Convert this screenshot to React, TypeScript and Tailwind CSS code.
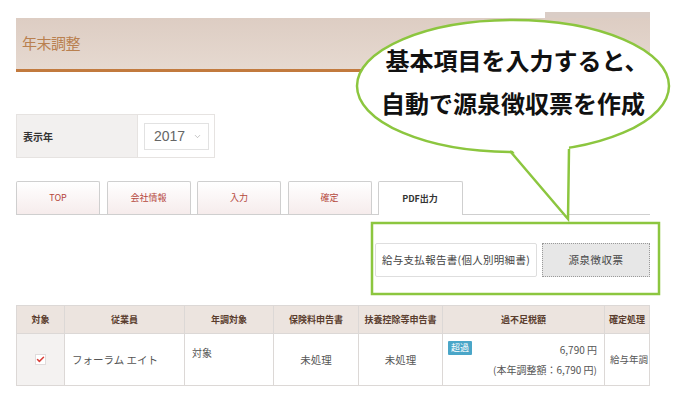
import { Check, ChevronDown } from "lucide-react"

const jp = "font-['Noto_Sans_CJK_JP','Noto_Sans',sans-serif]"

const tabs = ['TOP', '会社情報', '入力', '確定']

export default function App() {
  return (
    <div className={`relative w-[682px] h-[404px] overflow-hidden bg-white ${jp}`}>
      <div className="px-[16px] pt-[12px] w-[666px]">
        {/* header */}
        <div className="ml-auto w-[105px] h-[6px] bg-[#dacdc6]" />
        <div className="h-[54px] bg-gradient-to-b from-[#ddcdc3] to-[#e6d9d0] border-b-[3px] border-[#c27a3e] flex items-center pl-[6px]">
          <span className="text-[15px] text-[#b9804f] tracking-[-0.5px]">年末調整</span>
        </div>

        {/* year */}
        <div className="mt-[42px] w-[199px] h-[44px] border border-[#e6e3e1] flex">
          <div className="w-[121px] bg-[#f2f0ef] border-r border-[#e6e3e1] flex items-center pl-[6px] text-[10px] font-bold text-[#333]">
            表示年
          </div>
          <div className="flex items-center pl-[6px]">
            <div className="w-[65px] h-[27px] border border-[#e2e2e2] flex items-center justify-between pl-[9px] pr-[6px]">
              <span className="text-[14px] text-[#666] font-['Liberation_Sans',sans-serif]">2017</span>
              <ChevronDown className="w-[9px] h-[9px] text-[#999]" strokeWidth={1.5} />
            </div>
          </div>
        </div>

        {/* tabs */}
        <div className="mt-[24px] h-[33px] flex items-end border-b border-[#cfcfcf] w-[634px]">
          {tabs.map((t, i) => (
            <div
              key={t}
              className={`w-[84px] h-[33px] ${i > 0 ? 'ml-[6.5px]' : ''} border border-b-0 border-[#cfcfcf] rounded-t-[2px] bg-gradient-to-b from-white to-[#f6ecec] flex items-center justify-center text-[9px] text-[#b5473c]`}
            >
              {t}
            </div>
          ))}
          <div className="ml-[6px] w-[85px] h-[34px] -mb-px border border-b-0 border-[#cfcfcf] rounded-t-[2px] bg-white flex items-center justify-center text-[9px] text-[#333] font-semibold">
            PDF出力
          </div>
        </div>

        {/* pdf buttons */}
        <div className="mt-[28px] flex justify-end w-[634px] gap-[5px]">
          <div className="w-[162px] h-[34px] border border-[#dedede] rounded-[2px] bg-white flex items-center justify-center text-[10.5px] text-[#444] tracking-[0.3px]">
            給与支払報告書(個人別明細書)
          </div>
          <div className="w-[108px] h-[34px] border border-dotted border-[#9a9a9a] bg-[#e7e7e7] flex items-center justify-center text-[10.5px] text-[#444] tracking-[0.5px]">
            源泉徴収票
          </div>
        </div>

        {/* table */}
        <div className="mt-[28px] w-[634px] border border-[#dcd8d6] text-[10px] whitespace-nowrap">
          <div className="flex h-[28px] bg-[#ece4df] border-b border-[#dcd8d6] text-[9px] font-bold text-[#5a3d2e]">
            <div className="w-[47px] flex items-center justify-center">対象</div>
            <div className="w-[120px] flex items-center justify-center border-l border-[#dcd8d6]">従業員</div>
            <div className="w-[89px] flex items-center justify-center border-l border-[#dcd8d6]">年調対象</div>
            <div className="w-[85px] flex items-center justify-center border-l border-[#dcd8d6]">保険料申告書</div>
            <div className="w-[84px] flex items-center justify-center border-l border-[#dcd8d6]">扶養控除等申告書</div>
            <div className="w-[162px] flex items-center justify-center border-l border-[#dcd8d6]">過不足税額</div>
            <div className="flex-1 flex items-center justify-center border-l border-[#dcd8d6]">確定処理</div>
          </div>
          <div className="flex h-[51px] text-[#555]">
            <div className="w-[47px] bg-[#f4f2f1] flex items-center justify-center">
              <div className="w-[11px] h-[11px] bg-white border border-[#e0dcdc] flex items-center justify-center">
                <Check className="w-[9px] h-[9px] text-[#d9403a]" strokeWidth={4} />
              </div>
            </div>
            <div className="w-[120px] flex items-center pl-[7px] border-l border-[#dcd8d6] text-[10.5px]">フォーラム エイト</div>
            <div className="w-[89px] pl-[7px] pt-[11px] border-l border-[#dcd8d6]">対象</div>
            <div className="w-[85px] flex items-center justify-center border-l border-[#dcd8d6] text-[10.5px]">未処理</div>
            <div className="w-[84px] flex items-center justify-center border-l border-[#dcd8d6] text-[10.5px]">未処理</div>
            <div className="w-[162px] border-l border-[#dcd8d6] relative pr-[7px] pt-[8px] flex flex-col items-end">
              <span className="absolute left-[5px] top-[7px] px-[3px] h-[14px] bg-[#4aa6c8] text-white text-[9px] rounded-[1px] flex items-center">超過</span>
              <span className="h-[16px] leading-[16px]">6,790 円</span>
              <span className="mt-[4px] h-[16px] leading-[16px]">(本年調整額：6,790 円)</span>
            </div>
            <div className="flex-1 min-w-0 flex items-center pl-[5px] border-l border-[#dcd8d6] text-[9.5px] overflow-hidden">給与年調</div>
          </div>
        </div>
      </div>

      {/* callout */}
      <svg className="absolute inset-0 pointer-events-none" width="682" height="404" viewBox="0 0 682 404">
        <ellipse cx="513" cy="86" rx="156" ry="66" fill="white" stroke="#8cc63f" strokeWidth="2.5" />
        <polygon points="508,145 568,219 569,143" fill="white" />
        <polyline points="510,151 568,219 569,149" fill="none" stroke="#8cc63f" strokeWidth="2.5" strokeLinejoin="miter" />
        <rect x="372" y="223" width="287" height="71" fill="none" stroke="#8cc63f" strokeWidth="2.5" />
      </svg>
      <div className="absolute left-[357px] top-[44px] w-[312px] flex flex-col items-center text-[24px] font-bold text-[#111] leading-[32px]">
        <span className="pl-[8px]">基本項目を入力すると、</span>
        <span className="mt-[11px]">自動で源泉徴収票を作成</span>
      </div>
    </div>
  )
}
